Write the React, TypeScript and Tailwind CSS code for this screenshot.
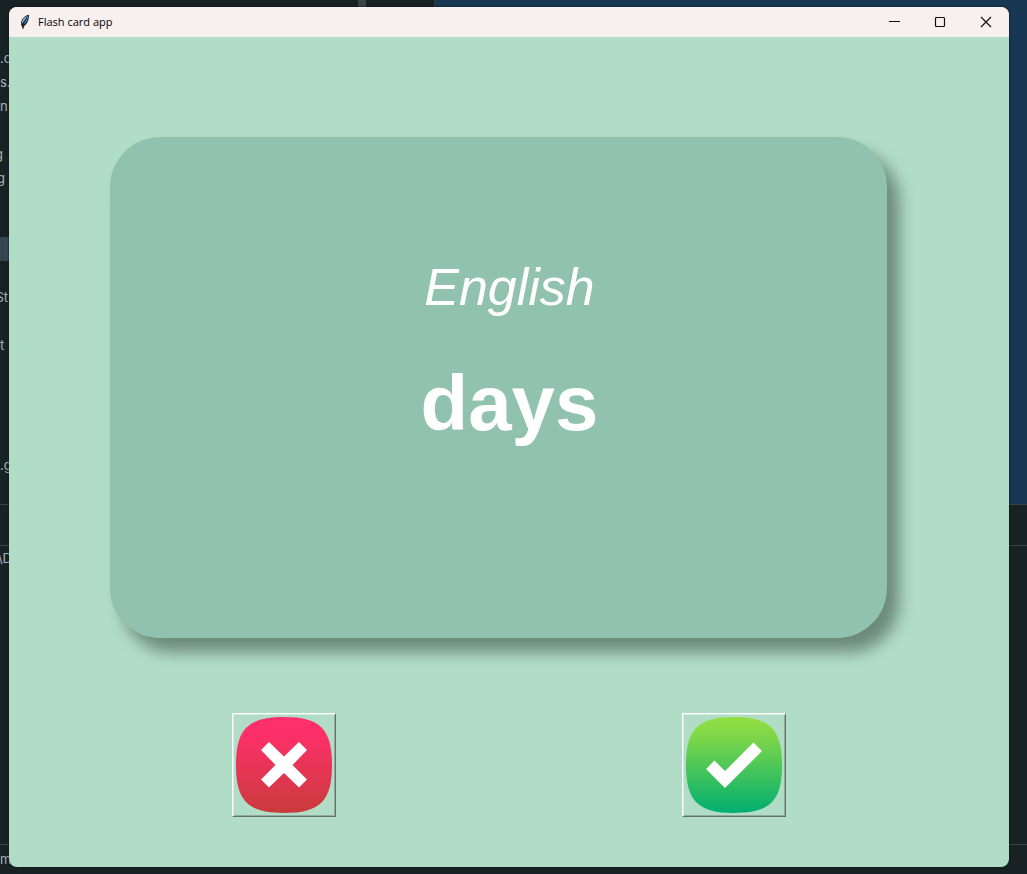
import type { ReactNode } from "react";

function EditorGutter() {
  return (
    <div className="w-[10px] overflow-hidden whitespace-pre pt-[46px] font-['Inter',sans-serif] text-[13px] leading-6 text-[#a9b0b6]">
      <div>.c</div>
      <div>s.</div>
      <div>n</div>
      <div className="mt-6 flex justify-end pr-[7px]">g</div>
      <div className="flex justify-end pr-[5px]">g</div>
      <div className="mt-[47px] h-6 bg-[#36454f]" />
      <div className="mt-6 flex justify-end pr-[2px]">St</div>
      <div className="mt-6">t</div>
      <div className="mt-24">.g</div>
    </div>
  );
}

function Backdrop() {
  return (
    <div aria-hidden="true" className="absolute inset-0 flex flex-col overflow-hidden bg-[#182123]">
      <div className="flex h-[504px] shrink-0">
        <EditorGutter />
        <div className="flex flex-1">
          <div className="ml-[348px] w-2 bg-[#3a4245]" />
          <div className="w-[68px]" />
          <div className="w-px bg-[#30393c]" />
          <div className="flex-1 bg-[#163652]" />
        </div>
      </div>
      <div className="h-[42px] shrink-0 border-y border-[#3b4346]" />
      <div className="flex-1 whitespace-pre font-['Inter',sans-serif] text-[13px] leading-6 text-[#a9b0b6]">
        <div className="flex w-[12px] justify-end">\D</div>
      </div>
      <div className="h-[30px] shrink-0 border-t border-[#3b4346] font-['Inter',sans-serif] text-[13px] leading-7 text-[#a9b0b6]">
        m
      </div>
    </div>
  );
}

function FeatherIcon() {
  return (
    <svg width="10" height="16" viewBox="0 0 10 16" aria-hidden="true">
      <path d="M9 .7C5.700 1 2.500 4 1.300 7.500c-.6 2-.3 3.800.8 5L3 15l.8-2.600C7 10.500 9.200 6 9 .7Z" fill="#17202b" />
      <path d="M8.300 1.500C6.200 3 4.300 6 3.300 11 6.500 9 8.300 5.600 8.300 1.500Z" fill="#4b83bd" />
      <path d="M7.200 1.800C4.100 3.500 2 6.200 1.700 10.200 3.400 7.500 5.200 5 7.200 1.800Z" fill="#a9c9e8" />
      <path d="M6.800 4 3 11v4" fill="none" stroke="#10151d" strokeWidth=".8" />
    </svg>
  );
}

function CaptionButton({ label, children }: { label: string; children: ReactNode }) {
  return (
    <button type="button" aria-label={label} className="flex h-full w-[46px] items-center justify-center">
      <svg width="12" height="12" viewBox="0 0 12 12" fill="none" stroke="#111" aria-hidden="true">
        {children}
      </svg>
    </button>
  );
}

function TitleBar() {
  return (
    <header className="flex h-[30px] items-center bg-[#f8f0ee] pl-[11px]">
      <FeatherIcon />
      <h1 className="ml-2 flex-1 font-['Open_Sans',sans-serif] text-[11px] leading-4 text-black">Flash card app</h1>
      <div className="flex h-full">
        <CaptionButton label="Minimize">
          <path d="M1 5.500h11" />
        </CaptionButton>
        <CaptionButton label="Maximize">
          <rect x="1.500" y="1.500" width="9" height="9" rx="1" strokeWidth="1.200" />
        </CaptionButton>
        <CaptionButton label="Close">
          <path d="m1 1 10 10M11 1 1 11" strokeWidth="1.200" />
        </CaptionButton>
      </div>
    </header>
  );
}

function AnswerButton({ label, children }: { label: string; children: ReactNode }) {
  return (
    <button
      type="button"
      aria-label={label}
      className="flex size-[104px] items-center justify-center border border-t-white border-r-[#69706c] border-b-[#69706c] border-l-white bg-[#b1ddc6] shadow-[inset_1px_1px_0_#d3ece0,inset_-1px_-1px_0_#93ab9f]"
    >
      <svg width="98" height="98" viewBox="0 0 98 98" aria-hidden="true">
        {children}
      </svg>
    </button>
  );
}

const TILE = "M49 1C85 1 97 13 97 49S85 97 49 97 1 85 1 49 13 1 49 1Z";

export default function App() {
  return (
    <div className="relative flex min-h-screen flex-col">
      <Backdrop />
      <main className="relative mt-[7px] mr-[18px] mb-[7px] ml-[9px] flex flex-1 flex-col overflow-hidden rounded-lg bg-[#b1ddc6] shadow-[0_0_2px_#111]">
        <TitleBar />
        <div className="flex flex-1 flex-col px-[50px] pt-[100px] pb-[50px]">
          <section className="pr-[72px] pl-[51px] font-['Liberation_Sans',sans-serif] text-white">
            <div className="h-[501px] rounded-[50px] bg-[#91c2af] pt-[120px] pl-[22px] text-center shadow-[12px_14px_16px_#6c897a]">
              <p className="text-[52px] leading-[60px] italic">English</p>
              <p className="mt-10 text-[78px] leading-[92px] font-bold">days</p>
            </div>
          </section>
          <div className="mt-[75px] grid grid-cols-2 justify-items-center">
            <AnswerButton label="Unknown word">
              <defs>
                <linearGradient id="wrong" x1="0" y1="0" x2="0" y2="1">
                  <stop offset="0" stopColor="#ff2f6c" />
                  <stop offset=".2" stopColor="#fc3068" />
                  <stop offset="1" stopColor="#c93b3b" />
                </linearGradient>
              </defs>
              <path d={TILE} fill="url(#wrong)" />
              <path d="m34 26 15 14.500L64 26l8 8-14.500 15L72 63.500l-8 8L49 57 34 71.500l-8-8L40.500 49 26 34Z" fill="#fff" />
            </AnswerButton>
            <AnswerButton label="Known word">
              <defs>
                <linearGradient id="right" x1="0" y1="0" x2="0" y2="1">
                  <stop offset="0" stopColor="#93df43" />
                  <stop offset=".2" stopColor="#7fd748" />
                  <stop offset="1" stopColor="#00ae70" />
                </linearGradient>
              </defs>
              <path d={TILE} fill="url(#right)" />
              <path d="m68.500 26.500 8.500 8.500-37 37-19-19 8.500-8.500L40 55Z" fill="#fff" />
            </AnswerButton>
          </div>
        </div>
      </main>
    </div>
  );
}
